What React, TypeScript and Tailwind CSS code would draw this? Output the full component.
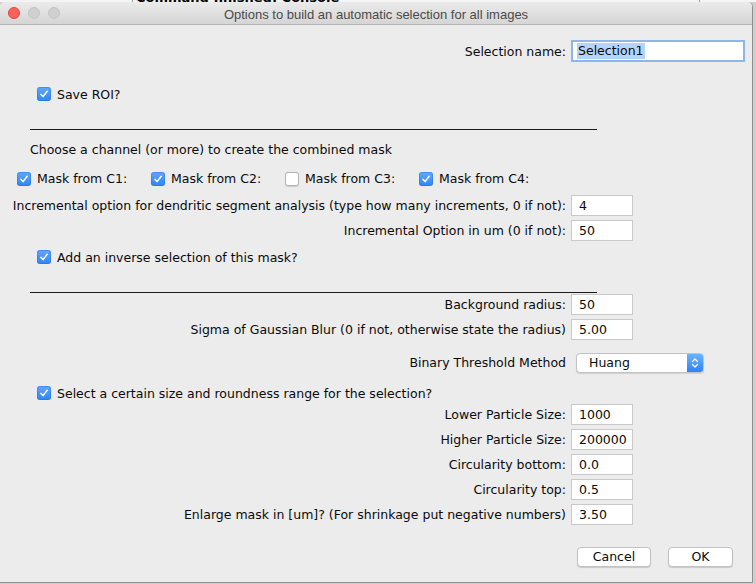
import React from "react";

const FONT = { fontFamily: '"DejaVu Sans", Verdana, sans-serif' };

function Check({ on }: { on: boolean }) {
  if (on) {
    return (
      <span className="inline-flex h-[14px] w-[14px] shrink-0 items-center justify-center rounded-[3px] bg-gradient-to-b from-[#5fa8fb] to-[#2d86f5] shadow-[inset_0_0_0_1px_rgba(30,100,220,0.35)]">
        <svg width="10" height="10" viewBox="0 0 10 10">
          <path d="M2 5.4 L4.1 7.6 L8.2 2.3" fill="none" stroke="white" strokeWidth="1.5" strokeLinecap="round" strokeLinejoin="round" />
        </svg>
      </span>
    );
  }
  return <span className="inline-block h-[14px] w-[14px] shrink-0 rounded-[3px] border border-[#b5b5b5] bg-white shadow-[0_0.5px_1px_rgba(0,0,0,0.15)]" />;
}

function CheckRow({ label, on, indent }: { label: string; on: boolean; indent: string }) {
  return (
    <div className={`flex h-[20px] items-center gap-[6px] ${indent}`}>
      <Check on={on} />
      <span className="pt-[2px]">{label}</span>
    </div>
  );
}

function Field({ label, value, mt }: { label: string; value: string; mt: string }) {
  return (
    <div className={`flex h-[21px] items-center ${mt}`}>
      <div className="w-[566px] shrink-0 pt-[2px] text-right whitespace-nowrap">{label}</div>
      <div className="ml-[5px] flex h-[21px] w-[62px] items-center border border-[#c9c9c9] bg-white pl-[7px] pt-[2px]">{value}</div>
    </div>
  );
}

function Separator({ mt }: { mt: string }) {
  return <div className={`ml-[30px] h-px w-[567px] bg-[#1a1a1a] ${mt}`} />;
}

export default function App() {
  return (
    <div className="relative h-[584px] w-[756px] overflow-hidden bg-[#cfcfcf] text-[12.5px] text-[#0a0a0a]" style={FONT}>
      {/* background window strip */}
      <div className="flex h-[2px] overflow-hidden bg-[#f4f4f4]">
        <div className="ml-[132px] h-full w-px bg-[#9a9a9a]" />
        <div className="-mt-[9px] ml-[3px] text-[13px] font-bold leading-[13px] text-black">Command finished: Console</div>
        <div className="ml-auto mr-[56px] h-full w-px bg-[#9a9a9a]" />
      </div>
      {/* dialog window */}
      <div className="flex h-[581px] w-[753px] flex-col overflow-hidden rounded-t-[5px] border-r border-b border-[#8f8f8f] bg-[#ececec]">
        {/* title bar */}
        <div className="relative flex h-[23px] shrink-0 items-center border-b border-[#b3b3b3] bg-gradient-to-b from-[#ebebeb] to-[#d5d5d5]">
          <div className="ml-[8px] flex items-center gap-[8px]">
            <span className="h-[12px] w-[12px] rounded-full border border-[#e0443e] bg-[#fc605c]" />
            <span className="h-[12px] w-[12px] rounded-full border border-[#c4c4c4] bg-[#d0d0d0]" />
            <span className="h-[12px] w-[12px] rounded-full border border-[#c4c4c4] bg-[#d0d0d0]" />
          </div>
          <div
            className="absolute inset-0 flex items-center justify-center pt-[3px] text-[13px] text-[#4a4a4a]"
            style={{ fontFamily: '"Liberation Sans", Arial, sans-serif' }}
          >
            Options to build an automatic selection for all images
          </div>
        </div>

        {/* content */}
        <div className="flex flex-col">
          {/* Selection name */}
          <div className="mt-[15px] flex h-[21px] items-center">
            <div className="w-[566px] shrink-0 pt-[3px] text-right">Selection name:</div>
            <div className="ml-[5px] flex h-[22px] w-[174px] items-center border-2 border-[#8db6ea] bg-white pl-[4px] pt-[1px]">
              <span className="bg-[#b3d5fd] px-[1px] leading-[16px]">Selection1</span>
            </div>
          </div>

          <div className="mt-[23px]">
            <CheckRow label="Save ROI?" on indent="ml-[37px]" />
          </div>

          <Separator mt="mt-[25px]" />

          <div className="ml-[30px] mt-[9px] flex h-[20px] items-center pt-[3px]">Choose a channel (or more) to create the combined mask</div>

          <div className="ml-[17px] mt-[10px] flex h-[20px] items-center">
            <div className="flex w-[134px] items-center gap-[6px]">
              <Check on />
              <span className="pt-[1px]">Mask from C1:</span>
            </div>
            <div className="flex w-[134px] items-center gap-[6px]">
              <Check on />
              <span className="pt-[1px]">Mask from C2:</span>
            </div>
            <div className="flex w-[134px] items-center gap-[6px]">
              <Check on={false} />
              <span className="pt-[1px]">Mask from C3:</span>
            </div>
            <div className="flex w-[134px] items-center gap-[6px]">
              <Check on />
              <span className="pt-[1px]">Mask from C4:</span>
            </div>
          </div>

          <Field
            label="Incremental option for dendritic segment analysis (type how many increments, 0 if not):"
            value="4"
            mt="mt-[6px]"
          />
          <Field label="Incremental Option in um (0 if not):" value="50" mt="mt-[4px]" />

          <div className="mt-[6px]">
            <CheckRow label="Add an inverse selection of this mask?" on indent="ml-[37px]" />
          </div>

          <Separator mt="mt-[25px]" />

          <Field label="Background radius:" value="50" mt="mt-[1px]" />
          <Field label="Sigma of Gaussian Blur (0 if not, otherwise state the radius)" value="5.00" mt="mt-[4px]" />

          {/* Binary threshold */}
          <div className="mt-[13px] flex h-[20px] items-center">
            <div className="w-[566px] shrink-0 pt-[1px] text-right">Binary Threshold Method</div>
            <div className="ml-[10px] flex h-[20px] w-[128px] items-center overflow-hidden rounded-[4px] border border-[#c3c3c3] bg-white shadow-[0_1px_1px_rgba(0,0,0,0.12)]">
              <span className="flex-1 pl-[12px] pt-[1px]">Huang</span>
              <span className="flex h-full w-[16px] items-center justify-center bg-gradient-to-b from-[#6cb3fa] to-[#2b83f6]">
                <svg width="8" height="12" viewBox="0 0 8 12">
                  <path d="M1.5 4.5 L4 2 L6.5 4.5 M1.5 7.5 L4 10 L6.5 7.5" fill="none" stroke="white" strokeWidth="1.3" strokeLinecap="round" strokeLinejoin="round" />
                </svg>
              </span>
            </div>
          </div>

          <div className="mt-[10px]">
            <CheckRow label="Select a certain size and roundness range for the selection?" on indent="ml-[37px]" />
          </div>

          <Field label="Lower Particle Size:" value="1000" mt="mt-[1px]" />
          <Field label="Higher Particle Size:" value="200000" mt="mt-[4px]" />
          <Field label="Circularity bottom:" value="0.0" mt="mt-[4px]" />
          <Field label="Circularity top:" value="0.5" mt="mt-[4px]" />
          <Field label="Enlarge mask in [um]? (For shrinkage put negative numbers)" value="3.50" mt="mt-[4px]" />

          {/* buttons */}
          <div className="mt-[22px] flex h-[20px] items-center">
            <div className="ml-[577px] flex h-[20px] w-[74px] items-center justify-center rounded-[4px] border border-[#c2c2c2] bg-white pt-[1px] shadow-[0_1px_1px_rgba(0,0,0,0.15)]">
              Cancel
            </div>
            <div className="ml-[17px] flex h-[20px] w-[65px] items-center justify-center rounded-[4px] border border-[#c2c2c2] bg-white pt-[1px] shadow-[0_1px_1px_rgba(0,0,0,0.15)]">
              OK
            </div>
          </div>
        </div>
      </div>
    </div>
  );
}
